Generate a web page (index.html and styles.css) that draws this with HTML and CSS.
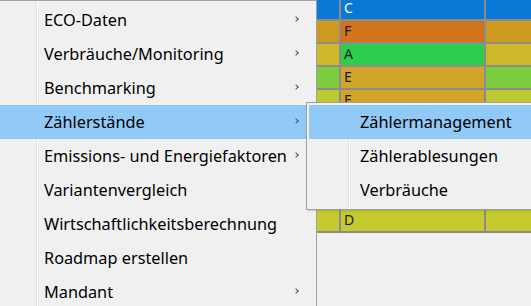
FILE: index.html
```html
<!DOCTYPE html>
<html lang="de">
<head>
    <meta charset="UTF-8">
    <title>Menü</title>
    <link rel="stylesheet" href="styles.css">
</head>
<body>
    <div class="grid">
        <div class="row blue first"><span></span><span>C</span><span></span></div>
        <div class="row f"><span></span><span>F</span><span></span></div>
        <div class="row a"><span></span><span>A</span><span></span></div>
        <div class="row e"><span></span><span>E</span><span></span></div>
        <div class="row g hidden"><span></span><span>F</span><span></span></div>
        <div class="row g hidden"><span></span><span>E</span><span></span></div>
        <div class="row g hidden"><span></span><span>E</span><span></span></div>
        <div class="row g hidden"><span></span><span>F</span><span></span></div>
        <div class="row g hidden"><span></span><span>E</span><span></span></div>
        <div class="row d"><span></span><span>D</span><span></span></div>
    </div>

    <ul class="menu main">
        <li>ECO-Daten <i class="arrow"></i></li>
        <li>Verbräuche/Monitoring <i class="arrow"></i></li>
        <li>Benchmarking <i class="arrow"></i></li>
        <li class="active">Zählerstände <i class="arrow"></i></li>
        <li>Emissions- und Energiefaktoren <i class="arrow"></i></li>
        <li>Variantenvergleich</li>
        <li>Wirtschaftlichkeitsberechnung</li>
        <li>Roadmap erstellen</li>
        <li>Mandant <i class="arrow"></i></li>
    </ul>

    <ul class="menu sub">
        <li class="active">Zählermanagement</li>
        <li>Zählerablesungen</li>
        <li>Verbräuche</li>
    </ul>
</body>
</html>
```

FILE: styles.css
```css
body {
    margin: 0;
    height: 306px;
    overflow: hidden;
    background: #f0f0f0;
    font-family: "Noto Sans", "Open Sans", sans-serif;
    position: relative;
}

/* Tabelle im Hintergrund */
.grid {
    margin-left: 317px;
}
.row {
    display: grid;
    grid-template-columns: 24px 145px 1fr;
    height: 21px;
    border-bottom: 2px solid #8c8c8c;
}
.row.first { height: 19px; }
.row.hidden { height: 22px; }
.row span {
    border-right: 2px solid #8c8c8c;
    font-size: 14px;
    line-height: 16px;
    padding: 2px 0 0 3px;
    color: #1a1a1a;
}
.row.first span { padding-top: 0; }
.row span:last-child { border-right: none; }
.blue span { background: #0a78d7; color: #fff; }
.f span { background: #cf9a22; }
.f span:nth-child(2) { background: #d2741c; }
.a span { background: #cdb92a; }
.a span:nth-child(2) { background: #2fcd4f; }
.e span { background: #7dcc40; }
.e span:nth-child(2) { background: #d0a52a; }
.g span { background: #bcca30; }
.g span:nth-child(2) { background: #d0a52a; }
.d span { background: #c5cb2e; }

/* Kontextmenü */
.menu {
    position: absolute;
    margin: 0;
    padding: 2px;
    list-style: none;
    background-color: #f0f0f0;
    background-image: linear-gradient(to right, transparent 41px, #e3e3e3 41px, #e3e3e3 42px, #fff 42px, #fff 43px, transparent 43px);
    border: 1px solid #a0a0a0;
    font-size: 16.3px;
    color: #000;
}
.menu li {
    position: relative;
    height: 34px;
    line-height: 34px;
    padding-left: 47px;
    white-space: nowrap;
}
.menu li.active { background: #91c9f7; }
.main {
    left: -6px;
    top: 0;
    width: 317px;
}
.sub {
    left: 306px;
    top: 102px;
    width: 260px;
    box-shadow: 1px 1px 2px rgba(0, 0, 0, 0.15);
}
.sub li { padding-left: 51px; }

.arrow {
    position: absolute;
    right: 16px;
    top: 14px;
    width: 3px;
    height: 3px;
    border-top: 1.5px solid #555;
    border-right: 1.5px solid #555;
    transform: rotate(45deg);
}
```
